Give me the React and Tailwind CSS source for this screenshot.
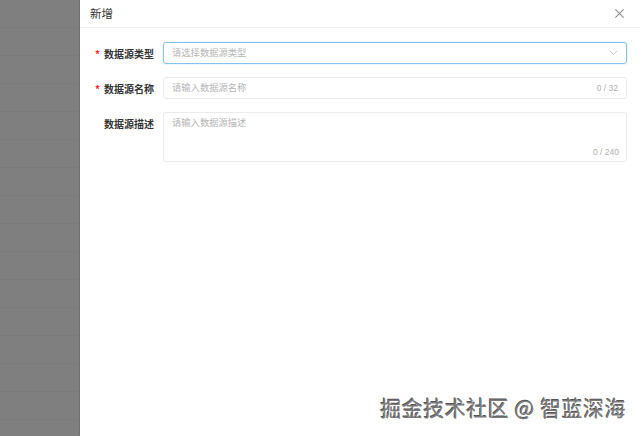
import { useState } from "react";

const cjk = { fontFamily: '"Noto Sans CJK SC", "Liberation Sans", sans-serif' };

function Label({ required, children }) {
  return (
    <div className="w-[83px] shrink-0 pr-[9px] flex justify-end items-center h-[22px] text-[10px] font-bold text-[#333]">
      {required && <span className="text-[#f5222d] mr-[4px] text-[10px]">*</span>}
      {children}
    </div>
  );
}

export default function App() {
  const [name, setName] = useState("");
  const [desc, setDesc] = useState("");

  return (
    <div className="relative w-[640px] h-[436px] flex overflow-hidden" style={cjk}>
      {/* mask over the page */}
      <div className="w-[80px] shrink-0 bg-[#7f7f7f] flex flex-col border-r border-[#6f6f6f]">
        {Array.from({ length: 15 }).map((_, i) => (
          <div key={i} className="h-[28px] border-b border-[#7b7b7b]" />
        ))}
      </div>

      {/* drawer */}
      <div className="flex-1 bg-white flex flex-col">
        <div className="h-[28px] flex items-center justify-between px-[10px] border-b border-[#f2f2f2]">
          <span className="text-[11.5px] text-[#333]">新增</span>
          <svg width="11" height="11" viewBox="0 0 12 12" className="mr-[5px]">
            <path d="M1.5 1.5 L10.5 10.5 M10.5 1.5 L1.5 10.5" stroke="#888" strokeWidth="1.1" />
          </svg>
        </div>

        <div className="flex flex-col gap-[13px] pt-[14px] pr-[13px]">
          <div className="flex">
            <Label required>数据源类型</Label>
            <div className="flex-1 h-[22px] border border-[#84c3ec] rounded-[3px] flex items-center justify-between pl-[8px] pr-[8px] shadow-[0_0_0_1px_rgba(140,200,240,0.15)]">
              <span className="text-[9.3px] text-[#b5b5b5]">请选择数据源类型</span>
              <svg width="9" height="6" viewBox="0 0 9 6">
                <path d="M1 1 L4.5 4.5 L8 1" stroke="#c4c4c4" strokeWidth="0.9" fill="none" />
              </svg>
            </div>
          </div>

          <div className="flex">
            <Label required>数据源名称</Label>
            <div className="flex-1 h-[22px] border border-[#ebebeb] rounded-[3px] flex items-center pl-[8px] pr-[8px]">
              <input
                className="flex-1 outline-none text-[9.3px] text-[#333] placeholder:text-[#b5b5b5] bg-transparent"
                placeholder="请输入数据源名称"
                value={name}
                onChange={(e) => setName(e.target.value)}
              />
              <span className="text-[8.5px] text-[#b0b0b0]" style={{ fontFamily: '"Liberation Sans", sans-serif' }}>
                {name.length} / 32
              </span>
            </div>
          </div>

          <div className="flex">
            <Label>数据源描述</Label>
            <div className="flex-1 h-[50px] border border-[#ebebeb] rounded-[3px] relative">
              <textarea
                className="w-full h-full resize-none outline-none text-[9.3px] text-[#333] placeholder:text-[#b5b5b5] px-[8px] py-[3px] bg-transparent"
                placeholder="请输入数据源描述"
                value={desc}
                onChange={(e) => setDesc(e.target.value)}
              />
              <span className="absolute right-[7px] bottom-[2px] text-[8.5px] text-[#b0b0b0]" style={{ fontFamily: '"Liberation Sans", sans-serif' }}>
                {desc.length} / 240
              </span>
            </div>
          </div>
        </div>
      </div>

      {/* watermark */}
      <div
        className="absolute right-[14px] bottom-[13px] text-[21px] text-[#7a7a7a] tracking-[0.5px]"
        style={{ textShadow: "1px 1px 0 #fff, -0.6px -0.6px 0 #555" }}
      >
        掘金技术社区 @ 智蓝深海
      </div>
    </div>
  );
}
